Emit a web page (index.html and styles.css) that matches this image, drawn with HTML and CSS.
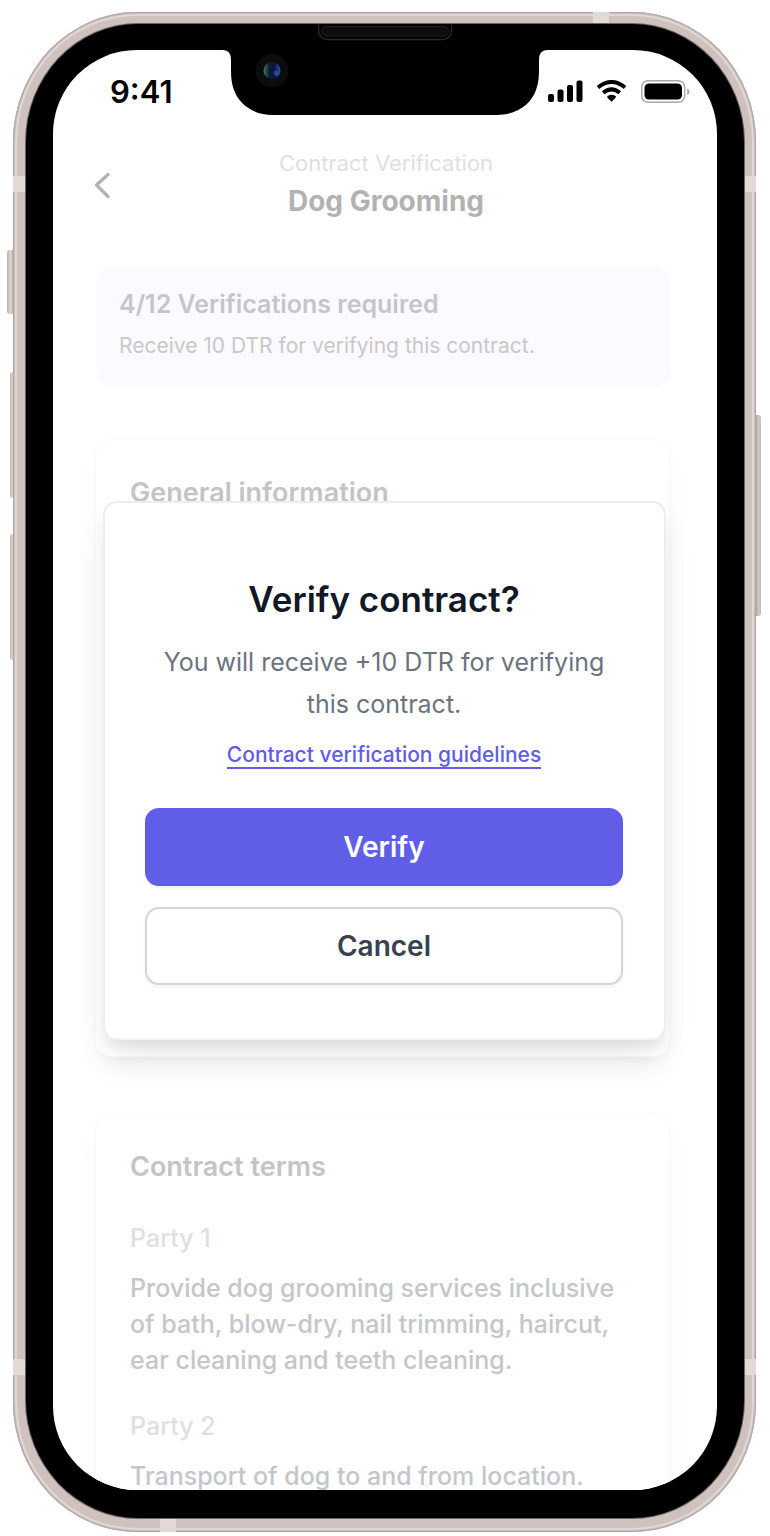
FILE: index.html
```html
<!DOCTYPE html>
<html lang="en">
<head>
<meta charset="utf-8">
<meta name="viewport" content="width=device-width, initial-scale=1">
<title>Verify contract</title>
<link rel="stylesheet" href="styles.css">
</head>
<body>
<div class="device">
  <span class="key key-mute"></span>
  <span class="key key-up"></span>
  <span class="key key-down"></span>
  <span class="key key-power"></span>
  <div class="rail">
    <span class="band band-top"></span>
    <span class="band band-bottom"></span>
    <span class="band band-side band-left band-upper"></span>
    <span class="band band-side band-right band-upper"></span>
    <span class="band band-side band-left band-lower"></span>
    <span class="band band-side band-right band-lower"></span>
    <div class="bezel">
      <div class="screen">
        <div class="status">
          <span class="time">9:41</span>
          <svg class="status-icons" width="142" height="24" viewBox="0 0 142 24" aria-hidden="true">
            <rect x="0" y="14" width="6" height="8" rx="2"/>
            <rect x="9.500" y="9.500" width="6" height="12.500" rx="2"/>
            <rect x="19" y="5" width="6" height="17" rx="2"/>
            <rect x="28.500" y="0.500" width="6" height="21.500" rx="2"/>
            <g fill="none" stroke="#000" stroke-width="4">
              <path d="M50 7.500Q63.500 -3.500 77 7.500"/>
              <path d="M55.200 12.800Q63.500 6 71.800 12.800"/>
            </g>
            <path d="M59.500 16.300Q63.500 13.400 67.800 16.300Q68.300 16.900 67.700 17.500L64.200 21.300Q63.600 21.900 63 21.300L59.300 17.500Q58.800 16.900 59.500 16.300Z"/>
            <rect x="93.700" y="0.700" width="43" height="21.600" rx="6.500" fill="none" stroke="#a6a6a6" stroke-width="1.400"/>
            <rect x="96.500" y="3.500" width="37.500" height="16" rx="4.500"/>
            <path d="M139.200 8.500Q141.500 9.500 141.500 11.700Q141.500 14 139.200 15Z" fill="#a6a6a6"/>
          </svg>
        </div>

        <header class="top">
          <button class="back" type="button" aria-label="Back">
            <svg width="16" height="26" viewBox="0 0 16 26" aria-hidden="true"><path d="M14 1.500L2.500 12L14 23.500" fill="none" stroke="#b2b2b2" stroke-width="3.200" stroke-linecap="round" stroke-linejoin="round"/></svg>
          </button>
          <div class="heading">
            <p class="kicker">Contract Verification</p>
            <h1>Dog Grooming</h1>
          </div>
        </header>

        <main class="content">
          <section class="notice">
            <h2>4/12 Verifications required</h2>
            <p>Receive 10 DTR for verifying this contract.</p>
          </section>
          <section class="card card-general">
            <h2>General information</h2>
          </section>
          <section class="card card-terms">
            <h2>Contract terms</h2>
            <h3>Party 1</h3>
            <p>Provide dog grooming services inclusive of bath, blow-dry, nail trimming, haircut, ear cleaning and teeth cleaning.</p>
            <h3>Party 2</h3>
            <p>Transport of dog to and from location.</p>
          </section>
        </main>

        <div class="overlay">
          <div class="modal" role="dialog" aria-modal="true" aria-labelledby="modal-title">
            <h2 id="modal-title">Verify contract?</h2>
            <p>You will receive +10 DTR for verifying this contract.</p>
            <a href="#guidelines">Contract verification guidelines</a>
            <div class="actions">
              <button class="btn btn-primary" type="button">Verify</button>
              <button class="btn btn-plain" type="button">Cancel</button>
            </div>
          </div>
        </div>
      </div>

      <svg class="notch" width="330" height="93" viewBox="0 0 330 93" aria-hidden="true">
        <defs>
          <linearGradient id="lens" x1="0" x2="1">
            <stop offset="0" stop-color="#3f7668"/>
            <stop offset="0.350" stop-color="#0a1a33"/>
            <stop offset="0.650" stop-color="#0b1440"/>
            <stop offset="1" stop-color="#2a50b8"/>
          </linearGradient>
        </defs>
        <path d="M0 0H330V26H327Q319 26 319 36C319 48 319.500 57 316 66C311 80 297 91 277 91H53C33 91 19 80 14 66C10.500 57 11 48 11 36Q11 26 3 26H0Z"/>
        <path d="M98.500 0V5Q98.500 15.500 108 15.500H221.500Q231.500 15.500 231.500 5V0" fill="none" stroke="#262626" stroke-width="1.300"/>
        <rect x="101.500" y="2.500" width="127" height="9.500" rx="4.700" fill="#0d0d0d" stroke="#222"/>
        <circle cx="52" cy="46.500" r="16.500" fill="#0c0c0c"/>
        <circle cx="52" cy="46.500" r="8.500" fill="url(#lens)"/>
        <circle cx="56" cy="49" r="2.500" fill="#5a62b0" opacity="0.500"/>
      </svg>
    </div>
  </div>
</div>
</body>
</html>
```
FILE: styles.css
```css
* { box-sizing: border-box; margin: 0; padding: 0; }

body {
  background: #fff;
  font-family: Inter, "Liberation Sans", sans-serif;
}

button { font: inherit; cursor: pointer; }

/* Device shell */
.device {
  position: relative;
  display: flex;
  height: 100vh;
  padding: 12px 14px 4px 13px;
}

.rail {
  position: relative;
  flex: 1;
  display: flex;
  padding: 12px 12px 14px 13px;
  border-radius: 124px / 130px;
  background: #cfc1be;
  box-shadow: inset 0 0 0 1px #b3a8a5, inset 0 0 0 2px #c9bcb9, inset 0 0 0 4px #e0d8d5;
  overflow: hidden;
}

.bezel {
  position: relative;
  flex: 1;
  display: flex;
  min-width: 0;
  padding: 26px 27px 28px;
  border-radius: 112px / 118px;
  background: #000;
  box-shadow: 0 0 0 1px #6d6563;
}

.screen {
  position: relative;
  flex: 1;
  min-width: 0;
  border-radius: 84px;
  background: #fff;
  overflow: hidden;
}

.notch {
  position: absolute;
  top: 0;
  left: 50%;
  transform: translateX(-50%);
}

.band { position: absolute; background: #e2dad7; }
.band-top { top: 0; right: 147px; width: 16px; height: 11px; }
.band-bottom { bottom: 0; left: 147px; width: 16px; height: 13px; }
.band-side { width: 12px; height: 16px; }
.band-left { left: 0; }
.band-right { right: 0; }
.band-upper { top: 164px; }
.band-lower { bottom: 157px; }

.key {
  position: absolute;
  left: 10px;
  width: 4px;
  border-radius: 3px 0 0 3px;
  background: linear-gradient(90deg, #b5b0ac, #dcd7d3 50%, #a89e9a);
}
.key-mute { top: 250px; left: 7px; width: 7px; height: 64px; }
.key-up { top: 372px; height: 126px; }
.key-down { top: 534px; height: 126px; }
.key-power {
  top: 415px;
  left: auto;
  right: 9px;
  width: 6px;
  height: 201px;
  border-radius: 0 3px 3px 0;
  background: linear-gradient(270deg, #c5bfbb, #cdc6c1 50%, #9b918c);
}

/* Status bar */
.status {
  display: flex;
  align-items: center;
  justify-content: space-between;
  height: 84px;
  padding: 0 27px 0 57px;
}
.time { font-size: 31px; font-weight: 600; line-height: 36px; }

/* Page header */
.top {
  display: grid;
  grid-template-columns: 32px 1fr 32px;
  align-items: center;
  padding: 14px 39px 0 41px;
}
.back { display: flex; border: 0; background: none; }
.heading { text-align: center; }
.kicker { font-size: 22px; line-height: 30px; color: #e0e0e0; }
.heading h1 { font-size: 28px; font-weight: 700; line-height: 46px; color: #b2b2b2; }

.content { padding: 42px 47px 0 42px; }

.notice {
  margin-left: 2px;
  padding: 20px 22px 24px;
  border-radius: 14px;
  background: #fcfaff;
}
.notice h2 { font-size: 25px; font-weight: 600; line-height: 36px; color: #c3c6ca; }
.notice p { margin-top: 8px; font-size: 21px; line-height: 32px; color: #c8c8ca; }

.card {
  margin-top: 53px;
  padding: 34px 34px;
  border: 1px solid #fafafa;
  border-radius: 16px;
  background: #fff;
  box-shadow: 0 16px 28px -6px rgba(16, 24, 40, 0.05), 0 5px 10px -3px rgba(16, 24, 40, 0.03);
}
.card h2 { font-size: 27px; font-weight: 600; line-height: 38px; color: #c4c4c4; }
.card h3 { margin-top: 34px; font-size: 25px; font-weight: 450; line-height: 36px; color: #e0e0e0; }
.card p { margin-top: 14px; font-size: 25px; font-weight: 450; line-height: 36px; color: #c3c6ca; }
.card h3 + p + h3 { margin-top: 30px; }
.card-general { min-height: 618px; }
.card-terms { margin-top: 56px; }

/* Confirmation dialog */
.overlay {
  position: absolute;
  inset: 0;
  display: flex;
  align-items: center;
  justify-content: center;
  padding: 0 51px 0 50px;
}
.modal {
  flex: 1;
  padding: 74px 41px 53px 40px;
  border: 2px solid #ecedf2;
  border-bottom-color: #f2f3f5;
  border-radius: 14px;
  background: #fff;
  text-align: center;
  box-shadow: 0 18px 36px -6px rgba(16, 24, 40, 0.09), 0 10px 14px -5px rgba(16, 24, 40, 0.1);
}
.modal h2 { font-size: 35px; font-weight: 600; line-height: 44px; color: #111827; }
.modal p { margin-top: 20px; font-size: 25px; line-height: 42px; color: #6b7280; }
.modal a {
  display: inline-block;
  margin-top: 18px;
  border-bottom: 2px solid #625fe6;
  font-size: 21px;
  font-weight: 500;
  line-height: 24px;
  color: #5f5de6;
  text-decoration: none;
}
.actions { display: grid; gap: 21px; margin-top: 39px; }
.btn {
  height: 78px;
  border-radius: 14px;
  font-size: 28px;
  font-weight: 600;
  box-shadow: 0 2px 3px rgba(16, 24, 40, 0.06);
}
.btn-primary { border: 0; background: #605ee6; color: #fff; }
.btn-plain { border: 2px solid #d1d5de; background: #fff; color: #374151; }
```
